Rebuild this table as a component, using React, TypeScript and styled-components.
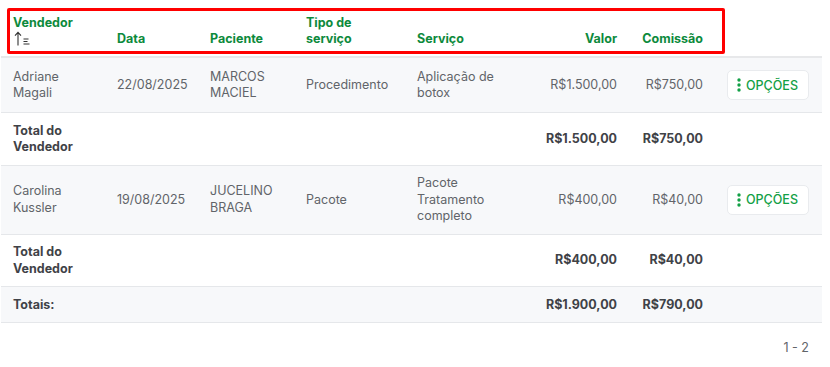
import React from "react";
import styled, { createGlobalStyle } from "styled-components";

const GlobalStyle = createGlobalStyle`
  html, body {
    margin: 0;
    padding: 0;
    background: #ffffff;
    font-family: "Inter", "Open Sans", sans-serif;
  }
`;

const Page = styled.div`
  width: 830px;
  padding-left: 1px;
  box-sizing: border-box;
`;

const TableWrap = styled.div`
  position: relative;
  width: 821px;
`;

const Highlight = styled.div`
  position: absolute;
  left: 6px;
  top: 8px;
  width: 718px;
  height: 46px;
  box-sizing: border-box;
  border: 3px solid #ff0000;
  border-radius: 2px;
  pointer-events: none;
`;

const Table = styled.table`
  width: 821px;
  border-collapse: collapse;
  table-layout: fixed;
`;

const HeadCell = styled.th<{ $align?: "left" | "right" }>`
  height: 46px;
  padding: 0 12px 10px;
  vertical-align: bottom;
  text-align: ${({ $align }) => $align ?? "left"};
  font-size: 12.5px;
  line-height: 15.5px;
  font-weight: 700;
  color: #0d8a3c;
  border-bottom: 2px solid #e7e8ea;
`;

const Row = styled.tr<{ $shade?: boolean }>`
  background: ${({ $shade }) => ($shade ? "#f7f8fa" : "#ffffff")};
  border-bottom: 1px solid #e5e7ea;
`;

const Cell = styled.td<{ $align?: "left" | "right"; $bold?: boolean }>`
  padding: 9.5px 12px 9px;
  vertical-align: middle;
  text-align: ${({ $align }) => $align ?? "left"};
  font-size: 12.5px;
  line-height: 16.5px;
  font-weight: ${({ $bold }) => ($bold ? 700 : 400)};
  color: ${({ $bold }) => ($bold ? "#3f4247" : "#616469")};
`;

const ActionCell = styled.td`
  padding: 12px 12px;
  vertical-align: middle;
`;

const OptionsButton = styled.button`
  display: flex;
  align-items: center;
  gap: 5px;
  height: 30px;
  width: 82px;
  padding: 0 0 0 9px;
  box-sizing: border-box;
  background: #ffffff;
  border: 1px solid #e9ebee;
  border-radius: 5px;
  color: #12a046;
  font-family: inherit;
  font-size: 12.5px;
  font-weight: 500;
  cursor: pointer;
`;

const SortRow = styled.span`
  display: block;
  margin-top: 1px;
  margin-left: 1px;
  height: 15px;
`;

const Footer = styled.div`
  display: flex;
  justify-content: flex-end;
  padding: 17px 21px 0 0;
  font-size: 12.5px;
  color: #616469;
`;

const SortIcon = () => (
  <svg width="17" height="15" viewBox="0 0 17 15" fill="none" stroke="#333" strokeWidth="1.1">
    <path d="M4 14.5V1.5M1 4.7L4 1.3L7 4.7" />
    <path d="M9.5 8h5M9.5 10.5h4M9.5 13h6" />
  </svg>
);

const DotsIcon = () => (
  <svg width="4" height="14" viewBox="0 0 4 14" fill="#12a046">
    <circle cx="2" cy="2" r="1.7" />
    <circle cx="2" cy="7" r="1.7" />
    <circle cx="2" cy="12" r="1.7" />
  </svg>
);

type Sale = {
  seller: string;
  date: string;
  patient: string;
  kind: string;
  service: string;
  value: string;
  commission: string;
};

const sales: Sale[] = [
  {
    seller: "Adriane Magali",
    date: "22/08/2025",
    patient: "MARCOS MACIEL",
    kind: "Procedimento",
    service: "Aplicação de botox",
    value: "R$1.500,00",
    commission: "R$750,00",
  },
  {
    seller: "Carolina Kussler",
    date: "19/08/2025",
    patient: "JUCELINO BRAGA",
    kind: "Pacote",
    service: "Pacote Tratamento completo",
    value: "R$400,00",
    commission: "R$40,00",
  },
];

const widths = [104, 93, 96, 111, 111, 113, 86, 107];

const SalesRow = ({ sale }: { sale: Sale }) => (
  <>
    <Row $shade>
      <Cell>{sale.seller}</Cell>
      <Cell>{sale.date}</Cell>
      <Cell>{sale.patient}</Cell>
      <Cell>{sale.kind}</Cell>
      <Cell>{sale.service}</Cell>
      <Cell $align="right">{sale.value}</Cell>
      <Cell $align="right">{sale.commission}</Cell>
      <ActionCell>
        <OptionsButton>
          <DotsIcon />
          OPÇÕES
        </OptionsButton>
      </ActionCell>
    </Row>
    <Row>
      <Cell $bold>Total do Vendedor</Cell>
      <Cell />
      <Cell />
      <Cell />
      <Cell />
      <Cell $bold $align="right">{sale.value}</Cell>
      <Cell $bold $align="right">{sale.commission}</Cell>
      <Cell />
    </Row>
  </>
);

export default function App() {
  return (
    <Page>
      <GlobalStyle />
      <TableWrap>
        <Table>
          <colgroup>
            {widths.map((w, i) => (
              <col key={i} style={{ width: w }} />
            ))}
          </colgroup>
          <thead>
            <tr>
              <HeadCell>
                Vendedor
                <SortRow>
                  <SortIcon />
                </SortRow>
              </HeadCell>
              <HeadCell>Data</HeadCell>
              <HeadCell>Paciente</HeadCell>
              <HeadCell>Tipo de serviço</HeadCell>
              <HeadCell>Serviço</HeadCell>
              <HeadCell $align="right">Valor</HeadCell>
              <HeadCell $align="right">Comissão</HeadCell>
              <HeadCell />
            </tr>
          </thead>
          <tbody>
            {sales.map((s) => (
              <SalesRow key={s.seller} sale={s} />
            ))}
            <Row $shade>
              <Cell $bold>Totais:</Cell>
              <Cell />
              <Cell />
              <Cell />
              <Cell />
              <Cell $bold $align="right">R$1.900,00</Cell>
              <Cell $bold $align="right">R$790,00</Cell>
              <Cell />
            </Row>
          </tbody>
        </Table>
        <Highlight />
      </TableWrap>
      <Footer>1 - 2</Footer>
    </Page>
  );
}
